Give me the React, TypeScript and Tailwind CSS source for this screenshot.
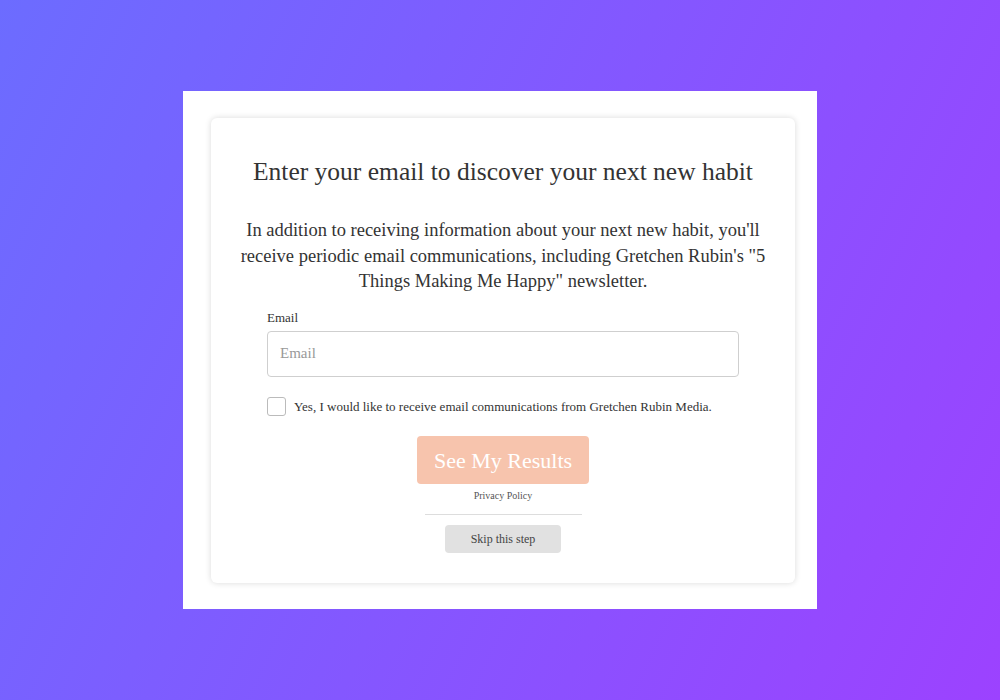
import React from 'react';

const serif = { fontFamily: '"Liberation Serif", "DejaVu Serif", serif' };

const App: React.FC = () => {
  return (
    <div
      className="w-full h-[700px] bg-linear-[115deg] from-[#6c6cff] to-[#9c42ff] flex justify-center pt-[91px]"
      style={serif}
    >
      <div className="w-[634px] h-[518px] bg-white pt-[27px] pl-[28px]">
        <div className="w-[584px] h-[465px] bg-white rounded-md shadow-[0_0_6px_rgba(0,0,0,0.15)] flex flex-col items-center text-[#333]">
          <h1 className="mt-[37px] text-[25.5px] leading-[34px]">
            Enter your email to discover your next new habit
          </h1>
          <p className="mt-[29px] w-[540px] text-center text-[18.5px] leading-[25.5px]">
            In addition to receiving information about your next new habit, you'll receive periodic email
            communications, including Gretchen Rubin's "5 Things Making Me Happy" newsletter.
          </p>
          <div className="w-[472px] mt-[14px]">
            <label className="block text-[13px] leading-[18px] text-[#333]">Email</label>
            <input
              type="email"
              placeholder="Email"
              className="mt-[4px] w-full h-[46px] border border-[#cfcfcf] rounded-[4px] px-[12px] text-[15px] placeholder:text-[#999] outline-none"
              style={serif}
            />
            <label className="mt-[20px] flex items-center gap-[8px] text-[13px] text-[#333]">
              <span className="w-[19px] h-[19px] border border-[#bbb] rounded-[3px] bg-white" />
              Yes, I would like to receive email communications from Gretchen Rubin Media.
            </label>
          </div>
          <button
            className="mt-[20px] w-[172px] h-[48px] bg-[#f7c4ad] rounded-[4px] text-white text-[22px]"
            style={serif}
          >
            See My Results
          </button>
          <a className="mt-[5px] text-[10px] leading-[14px] text-[#555]">Privacy Policy</a>
          <div className="mt-[11px] w-[157px] border-t border-[#ddd]" />
          <button
            className="mt-[10px] w-[116px] h-[28px] bg-[#e1e1e1] rounded-[4px] text-[12px] text-[#444]"
            style={serif}
          >
            Skip this step
          </button>
        </div>
      </div>
    </div>
  );
};

export default App;
